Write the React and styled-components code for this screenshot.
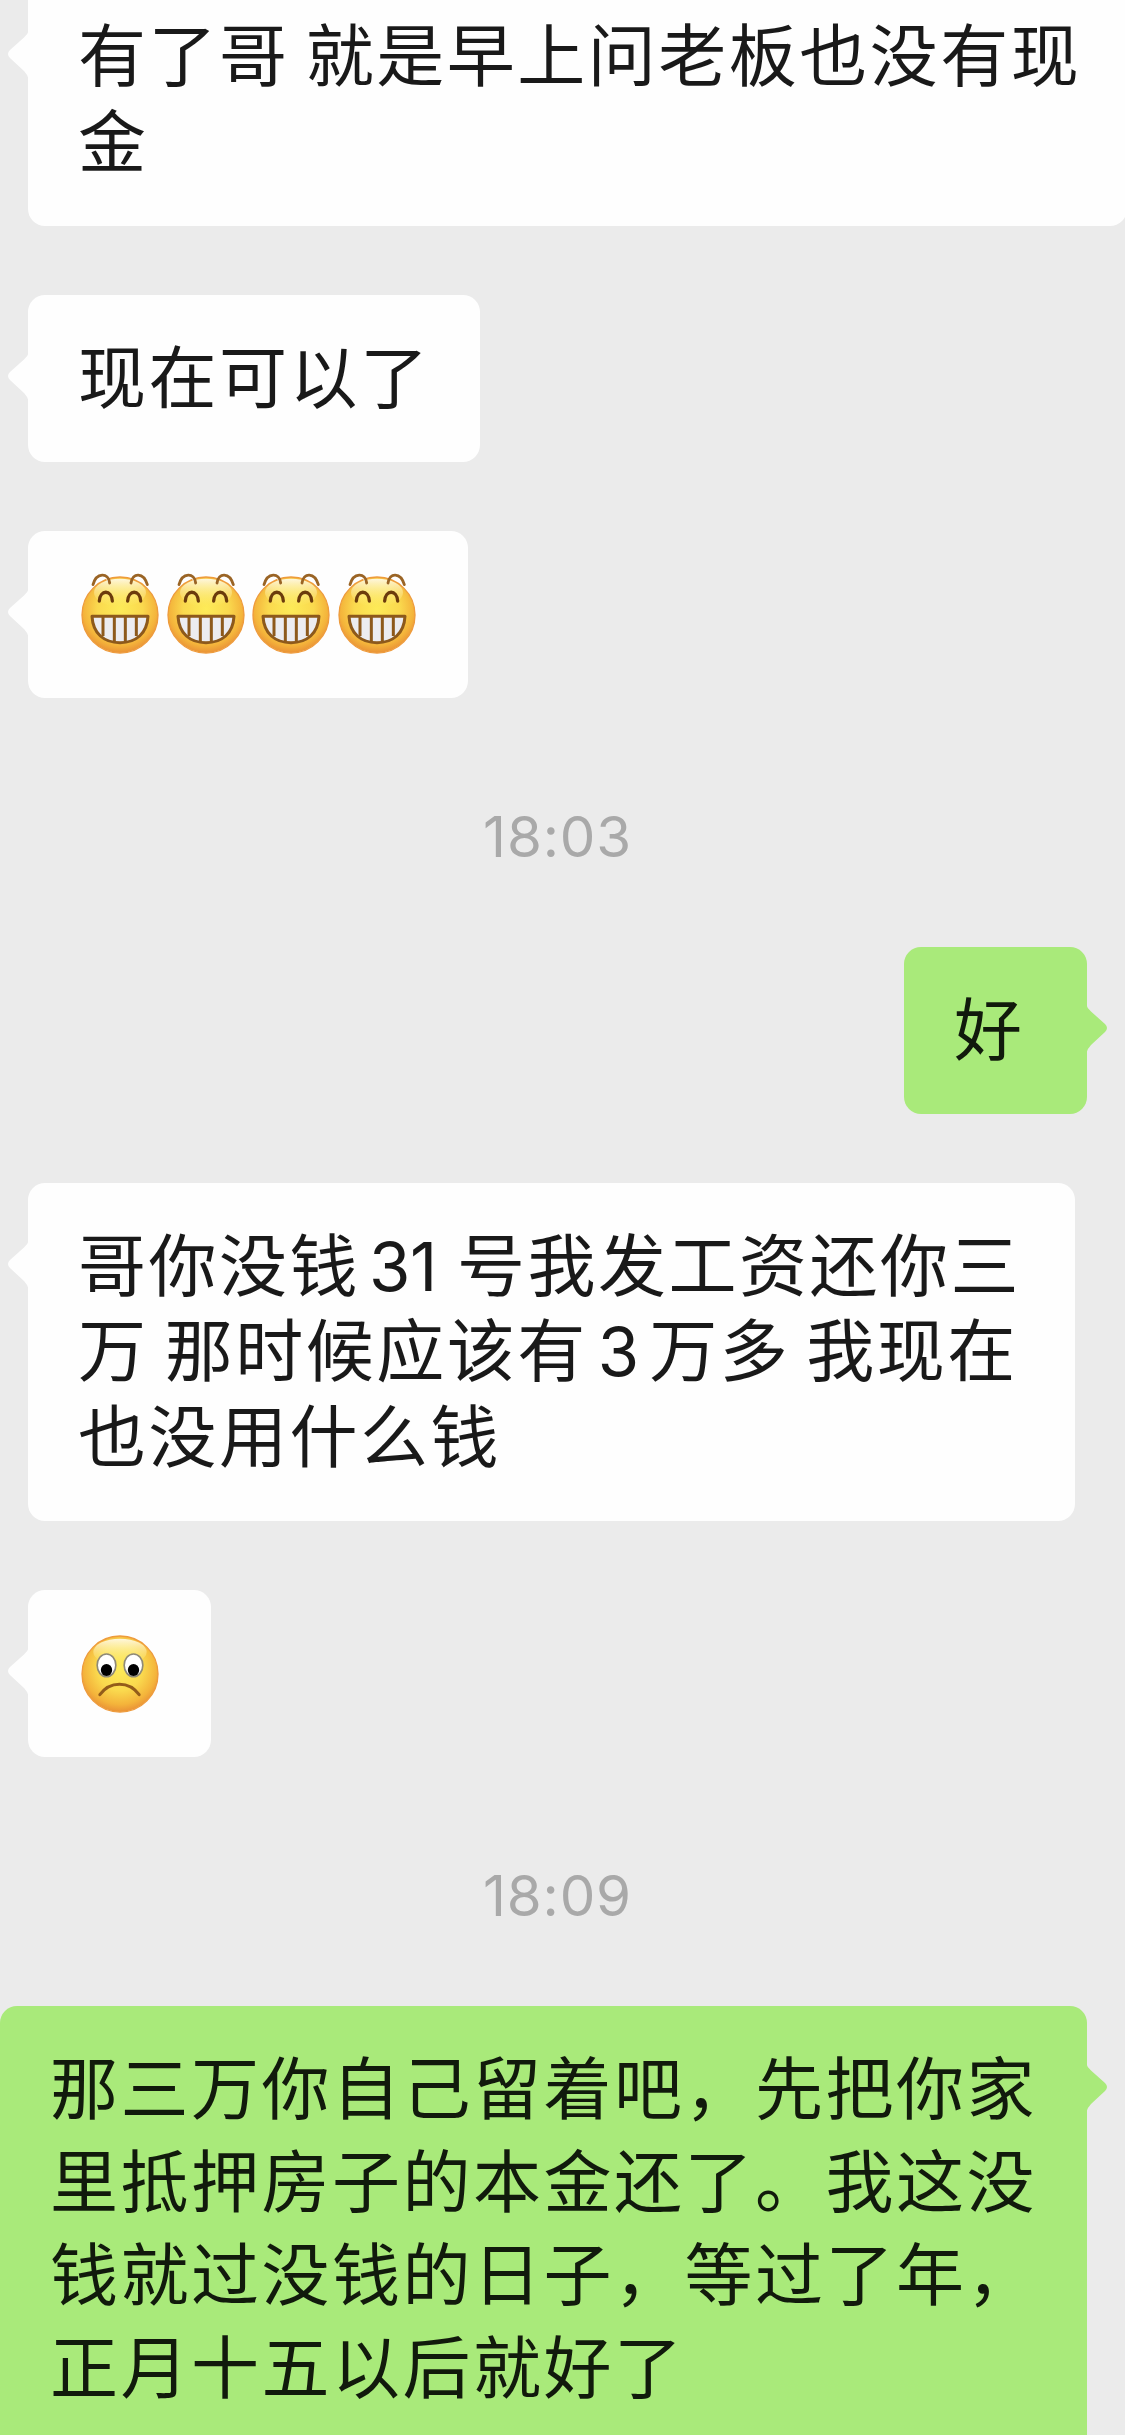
import React from "react";
import styled, { createGlobalStyle, css } from "styled-components";

const GlobalStyle = createGlobalStyle`
  * { box-sizing: border-box; }
  html, body { margin: 0; background: #ebebeb; }
  body { width: 1125px; height: 2435px; overflow: hidden; }
`;

const Chat = styled.main`
  display: flex;
  flex-direction: column;
  gap: 69px;
  width: 1125px;
  height: 2435px;
  margin-top: -27px;
  font-family: "Noto Sans CJK SC", sans-serif;
  color: #191919;
`;

const Message = styled.div`
  display: flex;
  flex: none;
  justify-content: ${(p) => (p.$mine ? "flex-end" : "flex-start")};
  padding: 0 38px 0 28px;
  margin-top: ${(p) => p.$after || 0}px;
`;

const Bubble = styled.div`
  position: relative;
  flex: none;
  width: ${(p) => p.$width}px;
  min-height: 167px;
  padding: 36px 0 45.5px 50px;
  border-radius: 17px;
  background: #fefefe;
  ${(p) =>
    p.$mine &&
    css`
      background: #a9ea7a;
      color: #111a0c;
    `}
  ${(p) =>
    p.$roomy &&
    css`
      padding: 32px 0 65px 50px;
    `}
`;

const TailShape = styled.svg`
  position: absolute;
  top: 57px;
  width: 22px;
  height: 50px;
  ${(p) =>
    p.$mine
      ? css`
          right: -21px;
          transform: scaleX(-1);
          fill: #a9ea7a;
        `
      : css`
          left: -21px;
          fill: #fefefe;
        `}
`;

const Line = styled.p`
  margin: 0;
  height: ${(p) => p.$height || 85.5}px;
  line-height: ${(p) => p.$height || 85.5}px;
  font-size: 68px;
  letter-spacing: 2.5px;
  word-spacing: -1.5px;
  white-space: nowrap;
`;

const Digits = styled.span`
  font-family: Inter, sans-serif;
  font-size: 67px;
  letter-spacing: -0.5px;
  margin: 0 ${(p) => p.$after}px 0 ${(p) => p.$before}px;
`;

const Faces = styled.div`
  display: flex;
  gap: 7.5px;
  margin: 9px 0 -4px 3px;
`;

const Face = styled.svg`
  display: block;
  width: 78px;
  height: 78px;
  overflow: visible;
`;

const Time = styled.time`
  display: block;
  flex: none;
  height: 60px;
  margin-top: ${(p) => p.$top}px;
  padding-right: 10px;
  text-align: center;
  font: 400 56.5px/60px Inter, sans-serif;
  letter-spacing: 0.8px;
  color: #a9a9a9;
`;

function Tail({ mine }) {
  return (
    <TailShape $mine={mine} viewBox="0 0 22 50">
      <path d="M22 0 Q21 4 17 7.500 L3 20 Q-1 24 3 28 L17 41 Q21 45 22 50 Z" />
    </TailShape>
  );
}

function Gradients({ id }) {
  return (
    <defs>
      <radialGradient id={`${id}-skin`} cx="0.5" cy="0.42" r="0.6">
        <stop offset="0" stopColor="#fdeb58" />
        <stop offset="0.5" stopColor="#fad94e" />
        <stop offset="0.8" stopColor="#f4b43b" />
        <stop offset="1" stopColor="#e78a35" />
      </radialGradient>
      <linearGradient id={`${id}-shine`} x1="0" y1="0" x2="0" y2="1">
        <stop offset="0" stopColor="#fffdf0" stopOpacity="0.9" />
        <stop offset="1" stopColor="#fff27a" stopOpacity="0" />
      </linearGradient>
    </defs>
  );
}

function Grin({ id }) {
  return (
    <Face viewBox="64 48 234 234" role="img" aria-label="grin">
      <Gradients id={id} />
      <circle cx="181" cy="165" r="114" fill={`url(#${id}-skin)`} stroke="#ee9b3c" strokeWidth="4" />
      <ellipse cx="181" cy="98" rx="78" ry="42" fill={`url(#${id}-shine)`} />
      <path d="M99 77 C108 34 149 31 152 72 L142 64 C138 43 115 51 99 77Z" fill="#fff" opacity="0.8" />
      <g fill="none" stroke="#9a6425" strokeWidth="8.5" strokeLinecap="round">
        <path d="M100 74 C110 36 147 37 150 69" />
        <path d="M214 69 C218 37 252 36 263 74" />
      </g>
      <g fill="none" stroke="#6b3b0c" strokeWidth="10" strokeLinecap="round">
        <path d="M119 123 C121 88 156 88 158 123" />
        <path d="M204 123 C206 88 241 88 243 123" />
      </g>
      <path d="M97 169 H265 C262 221 229 248 181 248 S100 221 97 169Z" fill="#ececf0" stroke="#8d591b" strokeWidth="9" strokeLinejoin="round" />
      <path d="M130 169 V228 M164 169 V246 M197 169 V246 M230 169 V228" stroke="#8d591b" strokeWidth="9" />
    </Face>
  );
}

function Sad({ id }) {
  return (
    <Face viewBox="243.5 195 234 234" role="img" aria-label="sad">
      <Gradients id={id} />
      <circle cx="360.5" cy="312" r="114" fill={`url(#${id}-skin)`} stroke="#ee9b3c" strokeWidth="4" />
      <ellipse cx="360.5" cy="246" rx="80" ry="40" fill={`url(#${id}-shine)`} />
      <g fill="#fff" stroke="#8f8a78" strokeWidth="5">
        <ellipse cx="320" cy="286" rx="28" ry="34" />
        <ellipse cx="401" cy="286" rx="28" ry="34" />
      </g>
      <ellipse cx="320" cy="300" rx="17" ry="18" />
      <ellipse cx="401" cy="300" rx="17" ry="18" />
      <path d="M300 374 C330 332 388 332 418 374" fill="none" stroke="#935c1a" strokeWidth="9" strokeLinecap="round" />
    </Face>
  );
}

export default function App() {
  return (
    <>
      <GlobalStyle />
      <Chat>
        <Message>
          <Bubble $width={1099}>
            <Tail />
            <Line>有了哥 就是早上问老板也没有现</Line>
            <Line>金</Line>
          </Bubble>
        </Message>
        <Message>
          <Bubble $width={452}>
            <Tail />
            <Line>现在可以了</Line>
          </Bubble>
        </Message>
        <Message>
          <Bubble $width={440}>
            <Tail />
            <Faces>
              {[0, 1, 2, 3].map((n) => (
                <Grin key={n} id={`grin-${n}`} />
              ))}
            </Faces>
          </Bubble>
        </Message>
        <Time $top={40}>18:03</Time>
        <Message $mine $after={11}>
          <Bubble $mine $width={183}>
            <Tail mine />
            <Line>好</Line>
          </Bubble>
        </Message>
        <Message>
          <Bubble $width={1047}>
            <Tail />
            <Line>
              哥你没钱<Digits $before={9} $after={4}>31</Digits> 号我发工资还你三
            </Line>
            <Line>
              万 那时候应该有<Digits $before={10} $after={10.5}>3</Digits>万多 我现在
            </Line>
            <Line>也没用什么钱</Line>
          </Bubble>
        </Message>
        <Message>
          <Bubble $width={183}>
            <Tail />
            <Faces>
              <Sad id="sad" />
            </Faces>
          </Bubble>
        </Message>
        <Time $top={40}>18:09</Time>
        <Message $mine $after={11}>
          <Bubble $mine $roomy $width={1087}>
            <Tail mine />
            <Line $height={93.3}>那三万你自己留着吧，先把你家</Line>
            <Line $height={93.3}>里抵押房子的本金还了。我这没</Line>
            <Line $height={93.3}>钱就过没钱的日子，等过了年，</Line>
            <Line $height={93.3}>正月十五以后就好了</Line>
          </Bubble>
        </Message>
      </Chat>
    </>
  );
}
